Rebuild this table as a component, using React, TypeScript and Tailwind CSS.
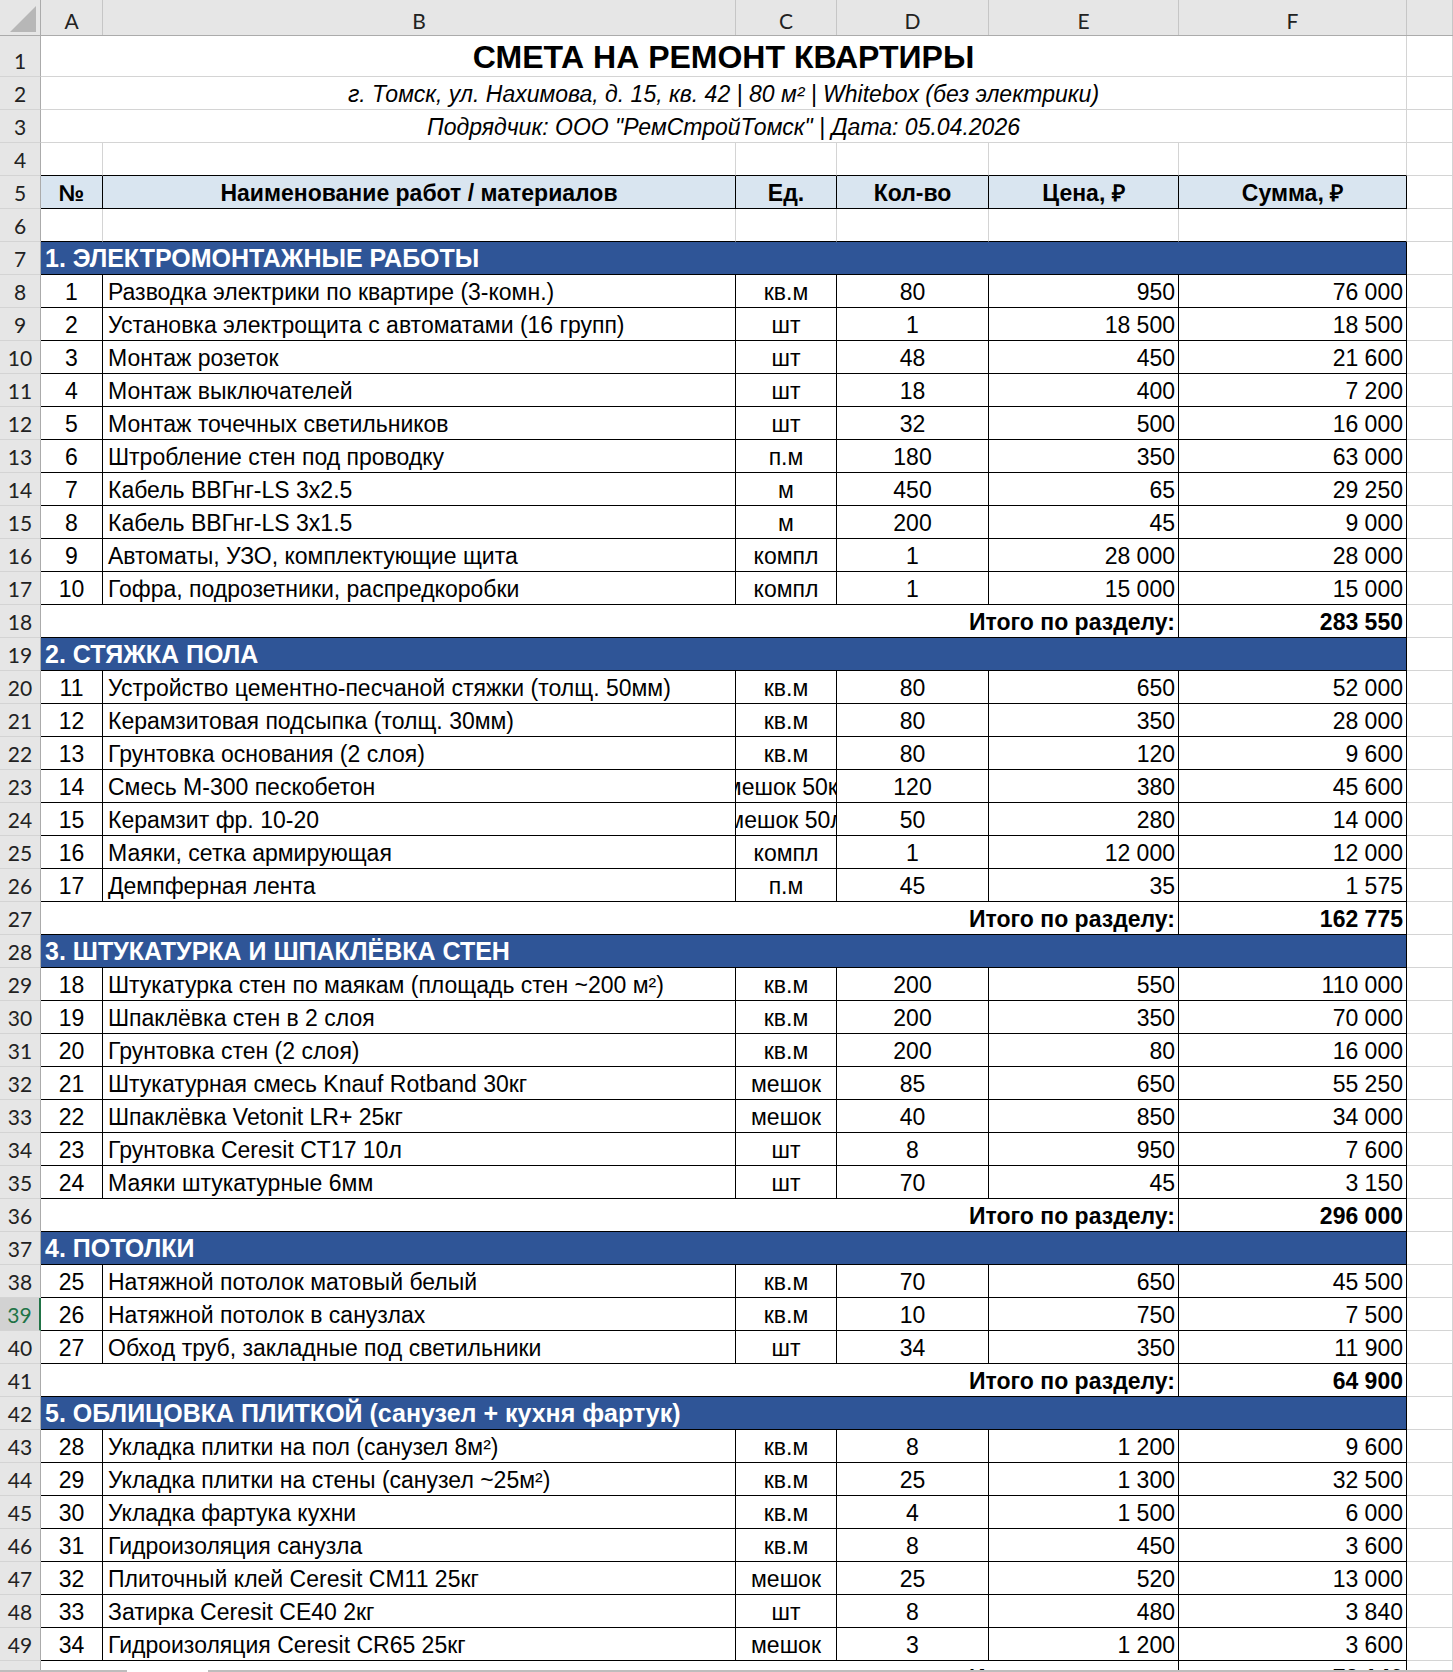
import React from 'react'

type Item = [string, string, number, number]

const sections: { title: string; items: Item[] }[] = [
  {
    title: '1. ЭЛЕКТРОМОНТАЖНЫЕ РАБОТЫ',
    items: [
      ['Разводка электрики по квартире (3-комн.)', 'кв.м', 80, 950],
      ['Установка электрощита с автоматами (16 групп)', 'шт', 1, 18500],
      ['Монтаж розеток', 'шт', 48, 450],
      ['Монтаж выключателей', 'шт', 18, 400],
      ['Монтаж точечных светильников', 'шт', 32, 500],
      ['Штробление стен под проводку', 'п.м', 180, 350],
      ['Кабель ВВГнг-LS 3х2.5', 'м', 450, 65],
      ['Кабель ВВГнг-LS 3х1.5', 'м', 200, 45],
      ['Автоматы, УЗО, комплектующие щита', 'компл', 1, 28000],
      ['Гофра, подрозетники, распредкоробки', 'компл', 1, 15000],
    ],
  },
  {
    title: '2. СТЯЖКА ПОЛА',
    items: [
      ['Устройство цементно-песчаной стяжки (толщ. 50мм)', 'кв.м', 80, 650],
      ['Керамзитовая подсыпка (толщ. 30мм)', 'кв.м', 80, 350],
      ['Грунтовка основания (2 слоя)', 'кв.м', 80, 120],
      ['Смесь М-300 пескобетон', 'мешок 50кг', 120, 380],
      ['Керамзит фр. 10-20', 'мешок 50л', 50, 280],
      ['Маяки, сетка армирующая', 'компл', 1, 12000],
      ['Демпферная лента', 'п.м', 45, 35],
    ],
  },
  {
    title: '3. ШТУКАТУРКА И ШПАКЛЁВКА СТЕН',
    items: [
      ['Штукатурка стен по маякам (площадь стен ~200 м²)', 'кв.м', 200, 550],
      ['Шпаклёвка стен в 2 слоя', 'кв.м', 200, 350],
      ['Грунтовка стен (2 слоя)', 'кв.м', 200, 80],
      ['Штукатурная смесь Knauf Rotband 30кг', 'мешок', 85, 650],
      ['Шпаклёвка Vetonit LR+ 25кг', 'мешок', 40, 850],
      ['Грунтовка Ceresit CT17 10л', 'шт', 8, 950],
      ['Маяки штукатурные 6мм', 'шт', 70, 45],
    ],
  },
  {
    title: '4. ПОТОЛКИ',
    items: [
      ['Натяжной потолок матовый белый', 'кв.м', 70, 650],
      ['Натяжной потолок в санузлах', 'кв.м', 10, 750],
      ['Обход труб, закладные под светильники', 'шт', 34, 350],
    ],
  },
  {
    title: '5. ОБЛИЦОВКА ПЛИТКОЙ (санузел + кухня фартук)',
    items: [
      ['Укладка плитки на пол (санузел 8м²)', 'кв.м', 8, 1200],
      ['Укладка плитки на стены (санузел ~25м²)', 'кв.м', 25, 1300],
      ['Укладка фартука кухни', 'кв.м', 4, 1500],
      ['Гидроизоляция санузла', 'кв.м', 8, 450],
      ['Плиточный клей Ceresit CM11 25кг', 'мешок', 25, 520],
      ['Затирка Ceresit CE40 2кг', 'шт', 8, 480],
      ['Гидроизоляция Ceresit CR65 25кг', 'мешок', 3, 1200],
    ],
  },
]

const fmt = (n: number) => String(n).replace(/\B(?=(\d{3})+(?!\d))/g, ' ')

const GRID = 'grid grid-cols-[41px_62px_633px_101px_152px_190px_228px_1fr]'
const LIGHT = 'border-r border-b border-[#d4d4d4]'
const DARK = 'border-r border-b border-black'

function RowNum({ n }: { n: number }) {
  const active = n === 39
  return (
    <div
      className={`flex items-end justify-center pb-[5px] leading-none font-['Lato',sans-serif] text-[21px] border-b border-[#d4d4d4] ${
        active
          ? 'bg-[#d2d2d2] text-[#217346] border-r-2 border-r-[#217346]'
          : 'bg-[#e6e6e6] text-[#222] border-r border-r-[#ababab]'
      }`}
    >
      {n}
    </div>
  )
}

function Cell({ className = '', children }: { className?: string; children?: React.ReactNode }) {
  return (
    <div className={`flex items-end overflow-hidden whitespace-nowrap pb-[3px] leading-none ${className}`}>
      {children}
    </div>
  )
}

export default function App() {
  const rows: React.ReactNode[] = []
  let r = 7
  let no = 1

  sections.forEach((s, si) => {
    rows.push(
      <div key={'s' + si} className={`${GRID} h-[33px]`}>
        <RowNum n={r} />
        <Cell className={`col-span-6 bg-[#2f5597] text-white font-bold text-[25px] pl-[4px] pb-[2px] ${DARK}`}>
          {s.title}
        </Cell>
        <Cell className={LIGHT} />
      </div>
    )
    r++
    let total = 0
    s.items.forEach((it, ii) => {
      const sum = it[2] * it[3]
      total += sum
      rows.push(
        <div key={`i${si}-${ii}`} className={`${GRID} h-[33px]`}>
          <RowNum n={r} />
          <Cell className={`justify-center ${DARK}`}>{no}</Cell>
          <Cell className={`pl-[5px] ${DARK}`}>{it[0]}</Cell>
          <Cell className={`justify-center ${DARK}`}>{it[1]}</Cell>
          <Cell className={`justify-center ${DARK}`}>{it[2]}</Cell>
          <Cell className={`justify-end pr-[3px] ${DARK}`}>{fmt(it[3])}</Cell>
          <Cell className={`justify-end pr-[3px] ${DARK}`}>{fmt(sum)}</Cell>
          <Cell className={LIGHT} />
        </div>
      )
      r++
      no++
    })
    rows.push(
      <div key={'t' + si} className={`${GRID} h-[33px]`}>
        <RowNum n={r} />
        <Cell className={`col-span-5 justify-end pr-[3px] font-bold ${DARK}`}>Итого по разделу:</Cell>
        <Cell className={`justify-end pr-[3px] font-bold ${DARK}`}>{fmt(total)}</Cell>
        <Cell className={LIGHT} />
      </div>
    )
    r++
  })

  return (
    <div className="h-[1672px] w-[1453px] flex flex-col overflow-hidden bg-white text-black font-['Liberation_Sans',Arial,sans-serif] text-[23px]">
      <div className="flex-1 overflow-hidden">
        {/* column letters */}
        <div className={`${GRID} h-[36px] bg-[#e6e6e6] border-b border-[#ababab]`}>
          <div className="border-r border-[#ababab] flex items-end justify-end">
            <svg width="28" height="28" viewBox="0 0 28 28" className="mb-[2px] mr-[3px]">
              <polygon points="1,27 27,27 27,1" fill="#b7b7b7" />
            </svg>
          </div>
          {['A', 'B', 'C', 'D', 'E', 'F', ''].map((c, i) => (
            <div
              key={i}
              className="flex items-end justify-center pb-[4px] leading-none font-['Lato',sans-serif] text-[21px] text-[#222] border-r border-[#c6c6c6]"
            >
              {c}
            </div>
          ))}
        </div>

        {/* title rows */}
        <div className={`${GRID} h-[41px]`}>
          <RowNum n={1} />
          <Cell className={`col-span-6 justify-center font-bold text-[32px] pb-[3px] ${LIGHT}`}>
            СМЕТА НА РЕМОНТ КВАРТИРЫ
          </Cell>
          <Cell className={LIGHT} />
        </div>
        <div className={`${GRID} h-[33px]`}>
          <RowNum n={2} />
          <Cell className={`col-span-6 justify-center italic text-[23px] pb-[3px] ${LIGHT}`}>
            г. Томск, ул. Нахимова, д. 15, кв. 42 | 80 м² | Whitebox (без электрики)
          </Cell>
          <Cell className={LIGHT} />
        </div>
        <div className={`${GRID} h-[33px]`}>
          <RowNum n={3} />
          <Cell className={`col-span-6 justify-center italic text-[23px] pb-[3px] ${LIGHT}`}>
            Подрядчик: ООО "РемСтройТомск" | Дата: 05.04.2026
          </Cell>
          <Cell className={LIGHT} />
        </div>
        <div className={`${GRID} h-[33px]`}>
          <RowNum n={4} />
          {[0, 1, 2, 3, 4, 5].map(i => (
            <Cell key={i} className="border-r border-[#d4d4d4] border-b border-b-black" />
          ))}
          <Cell className={LIGHT} />
        </div>

        {/* table header */}
        <div className={`${GRID} h-[33px]`}>
          <RowNum n={5} />
          {['№', 'Наименование работ / материалов', 'Ед.', 'Кол-во', 'Цена, ₽', 'Сумма, ₽'].map(h => (
            <Cell key={h} className={`justify-center font-bold bg-[#d9e5f0] ${DARK}`}>
              {h}
            </Cell>
          ))}
          <Cell className={LIGHT} />
        </div>
        <div className={`${GRID} h-[33px]`}>
          <RowNum n={6} />
          {[0, 1, 2, 3, 4, 5].map(i => (
            <Cell key={i} className="border-r border-[#d4d4d4] border-b border-b-black" />
          ))}
          <Cell className={LIGHT} />
        </div>

        {rows}
      </div>

      {/* sheet bar edge */}
      <div className="h-[2px] flex shrink-0">
        <div className="w-[127px] bg-[#bdbdbd]" />
        <div className="w-[81px] bg-white" />
        <div className="flex-1 bg-[#bdbdbd]" />
      </div>
    </div>
  )
}
